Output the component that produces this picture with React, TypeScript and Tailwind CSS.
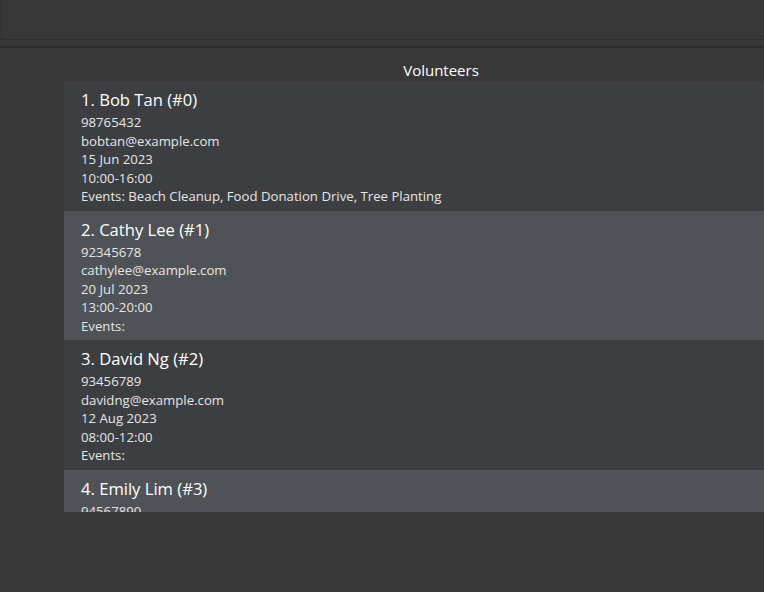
import React from "react";

type V = { name: string; phone: string; email?: string; date?: string; time?: string; events?: string };

const vols: V[] = [
  { name: "1. Bob Tan (#0)", phone: "98765432", email: "bobtan@example.com", date: "15 Jun 2023", time: "10:00-16:00", events: "Events: Beach Cleanup, Food Donation Drive, Tree Planting" },
  { name: "2. Cathy Lee (#1)", phone: "92345678", email: "cathylee@example.com", date: "20 Jul 2023", time: "13:00-20:00", events: "Events:" },
  { name: "3. David Ng (#2)", phone: "93456789", email: "davidng@example.com", date: "12 Aug 2023", time: "08:00-12:00", events: "Events:" },
  { name: "4. Emily Lim (#3)", phone: "94567890" },
];

function Card({ v, alt }: { v: V; alt: boolean }) {
  return (
    <div className={`h-[129.5px] shrink-0 pl-[17px] pt-[6px] ${alt ? "bg-[#4f5357]" : "bg-[#3c3e41]"}`}>
      <div className="text-[16.6px] leading-[26px] font-medium text-white">{v.name}</div>
      <div className="text-[13.2px] leading-[18.5px] text-[#e6e6e6]">
        <div>{v.phone}</div>
        {v.email && <div>{v.email}</div>}
        {v.date && <div>{v.date}</div>}
        {v.time && <div>{v.time}</div>}
        {v.events && <div>{v.events}</div>}
      </div>
    </div>
  );
}

export default function App() {
  return (
    <div className="w-[764px] h-[592px] bg-[#383838] flex flex-col overflow-hidden" style={{ fontFamily: '"Open Sans", "Noto Sans", sans-serif' }}>
      <div className="h-[40px] shrink-0 pl-[1px]">
        <div className="h-full border-l border-b border-[#2f2f2f] bg-[#383838]" />
      </div>
      <div className="h-[6px] shrink-0" />
      <div className="h-[2px] shrink-0 bg-[#2c2c2c]" />
      <div className="h-[15px] shrink-0" />
      <div className="flex pl-[64px]">
        <div className="flex-1 flex flex-col">
          <div className="h-[18px] flex justify-center items-center pl-[54px] text-[15px] leading-[18px] font-medium text-white -mt-[2px] mb-[2px]">Volunteers</div>
          <div className="h-[431px] flex flex-col overflow-hidden">
            {vols.map((v, i) => (
              <Card key={i} v={v} alt={i % 2 === 1} />
            ))}
          </div>
        </div>
      </div>
    </div>
  );
}
